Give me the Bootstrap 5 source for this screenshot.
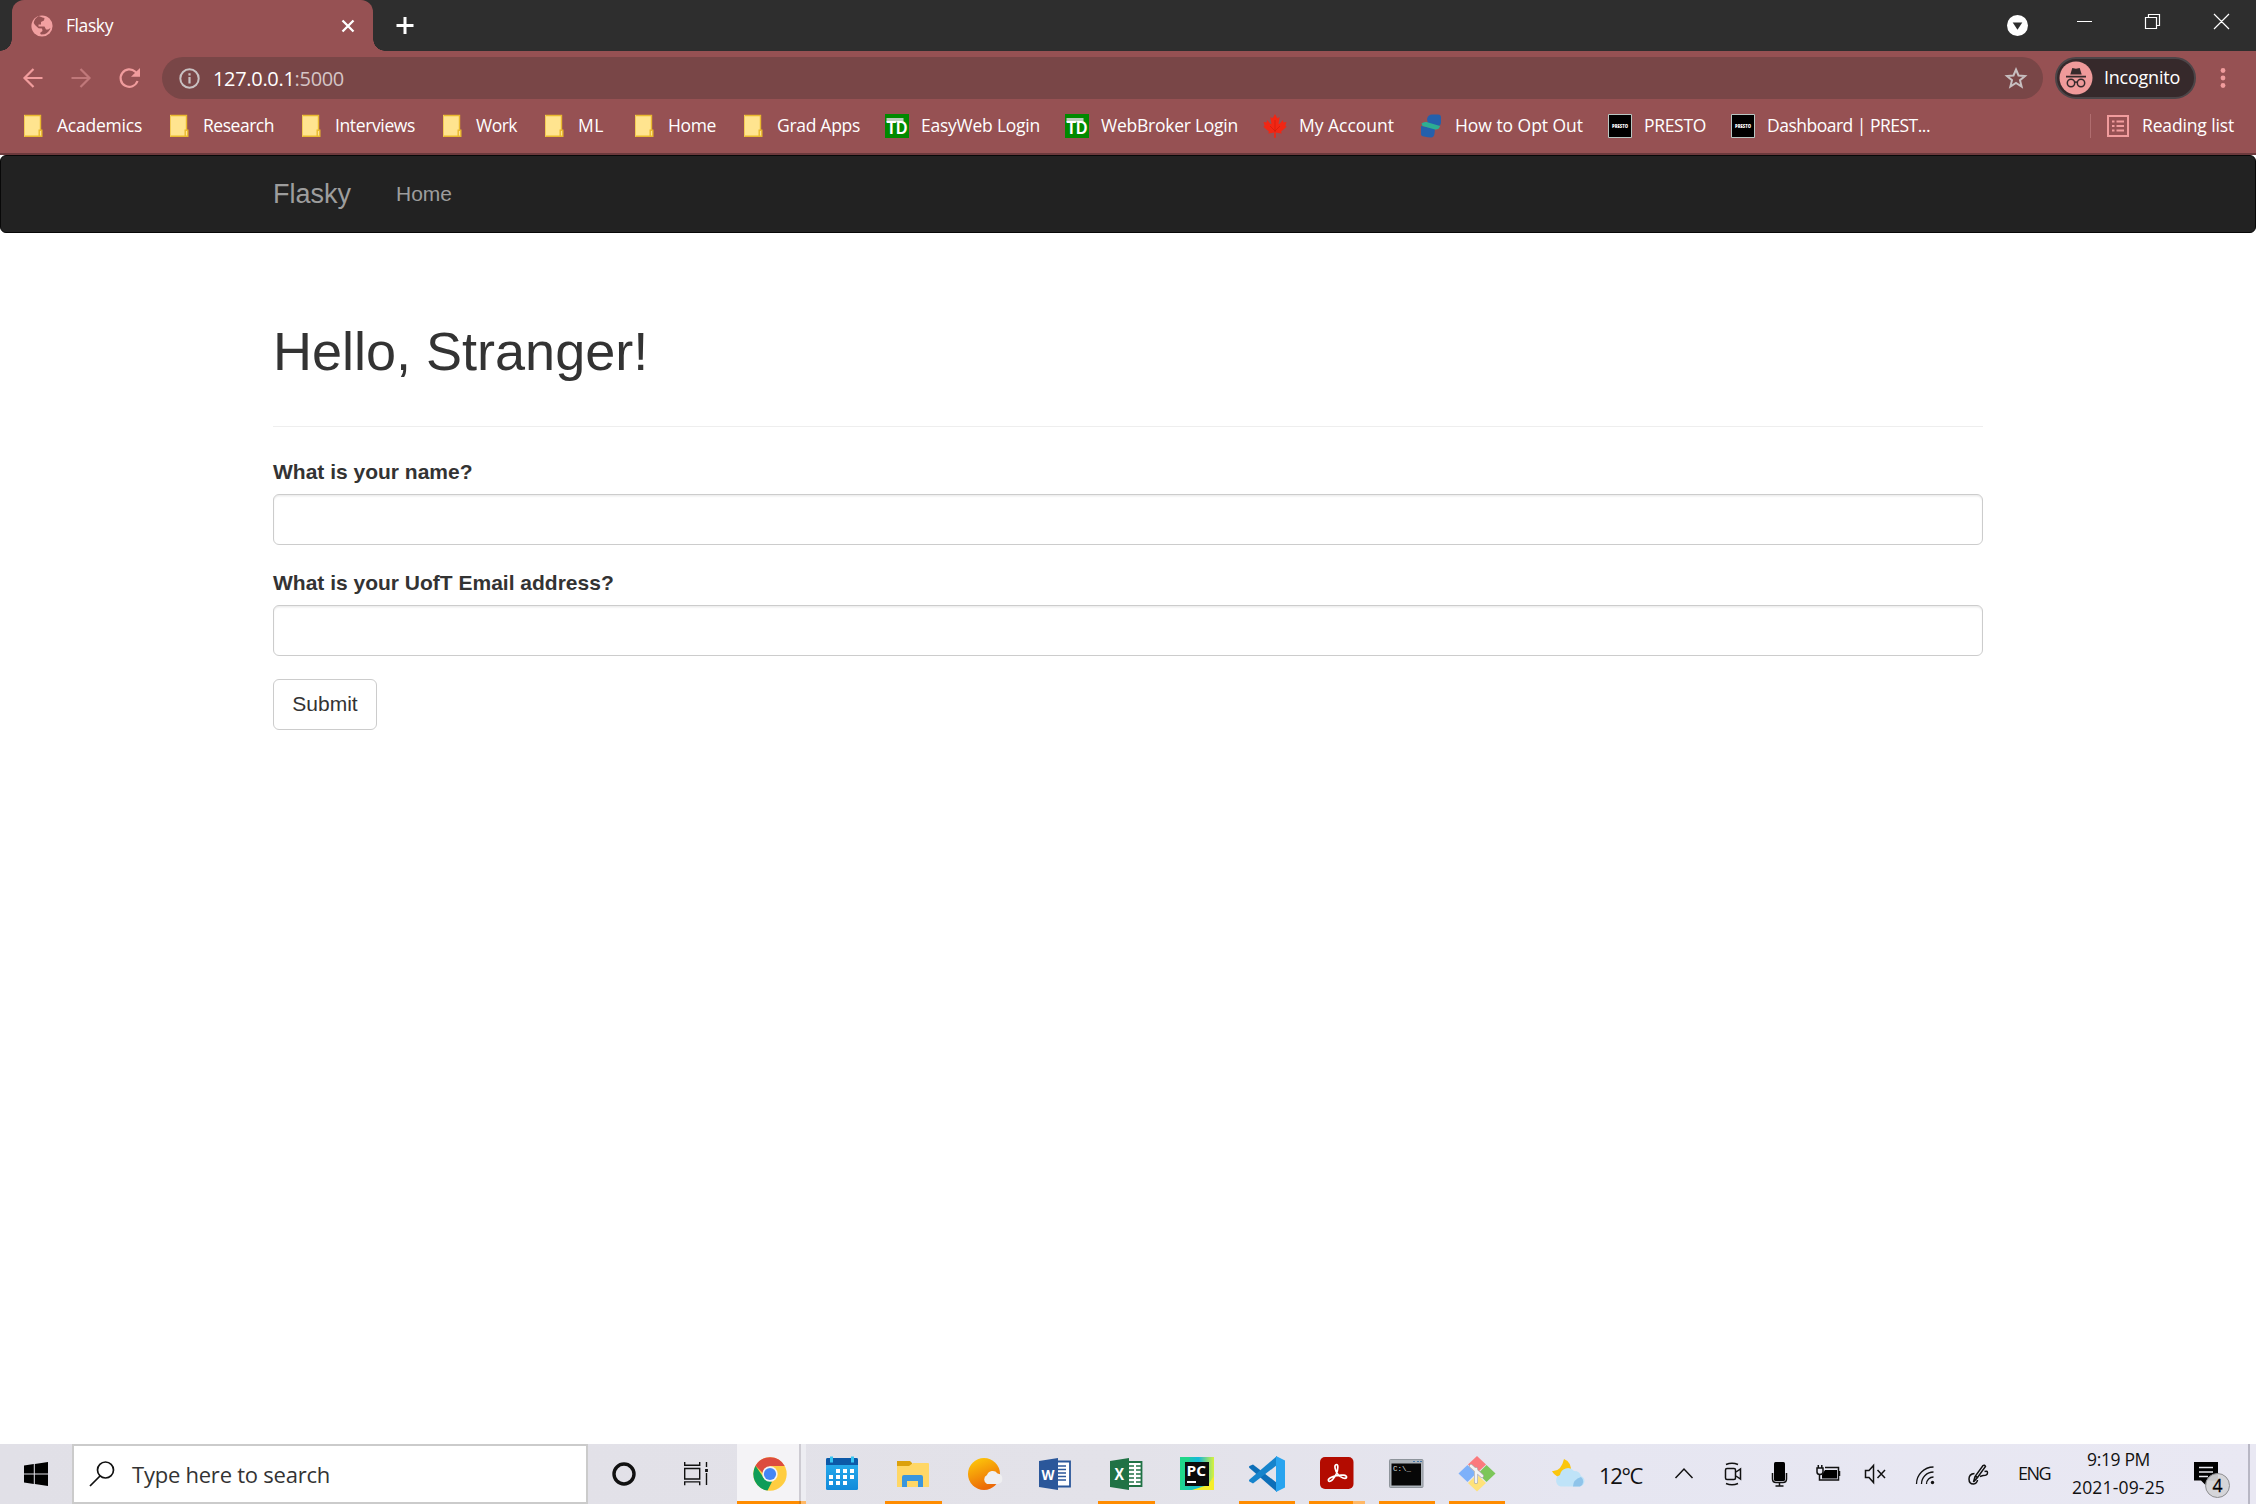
<!DOCTYPE html>
<html lang="en">
<head>
<meta charset="utf-8">
<title>Flasky</title>
<link href="https://cdn.jsdelivr.net/npm/bootstrap@5.3.0/dist/css/bootstrap.min.css" rel="stylesheet">
<style>
html,body{height:100%}
body{margin:0;background:#fff;overflow:hidden;font-family:"Liberation Sans",Arial,sans-serif;font-size:21px;line-height:30px;color:#333}
svg{display:block;flex:none}
.ui{font-family:"Open Sans","Noto Sans",sans-serif;white-space:nowrap}
[data-w]{display:inline-block;flex:none;white-space:nowrap}
/* browser frame */
.strip{height:51px;background:#2e2e2e}
.tabbox{position:relative;width:361px;margin-left:12px;background:#965153;border-radius:12px 12px 0 0;color:#fff;font-size:17.5px;line-height:51px}
.tabbox::before,.tabbox::after{content:"";position:absolute;bottom:0;width:12px;height:12px}
.tabbox::before{left:-12px;background:radial-gradient(circle at 0 0,transparent 11.5px,#965153 12px)}
.tabbox::after{right:-12px;background:radial-gradient(circle at 100% 0,transparent 11.5px,#965153 12px)}
.tabbox .ui{margin-left:19px}
.bar{height:54px;padding-top:6px;background:#965153}
.omni{width:1881px;height:42px;border-radius:21px;background:#794647;margin-left:7px}
.addr{font-size:20px;line-height:43px;color:#fff;margin-left:8px}
.addr span{color:#d5c5c6}
.incog{width:141px;height:42px;margin-left:12px;border:2px solid #4c4548;border-radius:21px;background:#36292b;color:#fff;font-size:18px;line-height:37px}
.marks{height:50px;background:#965153;border-bottom:2px solid #6b393c;padding-left:21px;color:#fff;font-size:17.5px;line-height:22px}
.marks .items{gap:24px;padding-bottom:6px}
.marks .items>div{gap:12px}
.marks .side{padding-bottom:6px;margin-right:21px}
.marks .side span{padding-bottom:2px}
/* page */
.navbar.top{height:78px;padding:0 0 1px;background:#222;border:1px solid #080808;border-radius:6px}
.wrap{width:1755px;max-width:none;padding:0 22.5px;margin:0 auto}
.navbar .wrap{display:flex;justify-content:flex-start}
.navbar .navbar-brand{font-size:27px;line-height:30px;padding:0;margin:0 45px 0 0;color:#9d9d9d}
.navbar .nav-link{font-size:21px;line-height:30px;padding:0;color:#9d9d9d}
main{flex:1 1 auto;min-height:0}
main.wrap{padding-top:89px}
h1.hello{font-size:54px;line-height:59.4px;font-weight:400;margin:0;padding-bottom:44.6px;border-bottom:1px solid #eee}
form{padding-top:29.5px}
.form-label{font-weight:700;margin:0 0 7.5px;display:block;line-height:30px}
.form-control{height:51px;border:1px solid #ccc;border-radius:6px;box-shadow:inset 0 1.5px 1.5px rgba(0,0,0,.075);margin-bottom:22.5px;padding:9px 18px;font-size:21px}
.btn.send{height:51px;width:104px;border:1px solid #ccc;border-radius:6px;padding:0 0 1px;font-size:21px;line-height:30px;color:#333;background:#fff}
/* taskbar */
.task{height:60px;background:linear-gradient(90deg,#e1e0e7,#e3e2e9 50%,#e6e6f1 70%,#e9e8f3);color:#111}
.find{flex:none;width:516px;height:60px;border:2px solid #cbcbcb;background:#fff;font-size:22px;line-height:57px;color:#333}
.temp{font-size:22px;line-height:62px;margin-left:13px}
.lang{font-size:18px;line-height:59px}
.clock{flex:none;font-size:17.5px;line-height:28px;width:94px;margin:1px 0 0 21px}
</style>
<script src="https://cdn.jsdelivr.net/npm/bootstrap@5.3.0/dist/js/bootstrap.bundle.min.js"></script>
</head>
<body class="d-flex flex-column">
<svg width="0" height="0" class="position-absolute">
<defs>
<symbol id="folder" viewBox="0 0 24 24"><path d="M3 1.5h16.5v15h1.5v6H3z" fill="#ffe48f"/><path d="M3 1.5h16.5v15M3 22.3h17.8v-6h-2.6v6" fill="none" stroke="#e9b92f" stroke-width="1.4"/><path d="M3.5 1v21.5" stroke="#f3cc55"/></symbol>
<symbol id="td" viewBox="0 0 24 24"><path d="M0 0h24v24H0z" fill="#008a00"/><path d="M1.500 4h17v4h-17z" fill="#b9cdb9"/><text x="1.500" y="19.500" font-family="Liberation Sans" font-weight="700" font-size="19" textLength="21" lengthAdjust="spacingAndGlyphs" fill="#fff">TD</text></symbol>
<symbol id="presto" viewBox="0 0 24 24"><path d="M.5.5h23v23H.5z" fill="#000" stroke="#b9c6c2"/><text x="4" y="14" font-family="Open Sans" font-weight="800" font-size="5" textLength="16" lengthAdjust="spacingAndGlyphs" fill="#fff">PRESTO</text></symbol>
</defs></svg>

<header>
<div class="strip d-flex">
  <div class="tabbox d-flex">
    <svg width="35" height="51" viewBox="12 0 35 51" overflow="visible"><circle cx="42" cy="26" r="10.600" fill="#f2a0a1"/><path d="M42.500 17.500l2 .5-.5 2.500-3 1.500v2.500h-2.500v2h6l1.500 3h2.200l2.300-1.500q-1.500 4.500-6 6.200l-3.500.3-1-1.500 2.500-2-.5-2.500-3.500-.3-3.500-3.200-1.300-2q.5-4.500 5-7z" fill="#965153"/><path d="M43.500 23.500l3.500-1 1.500 2.500-2 1.500-3-1z" fill="#f2a0a1"/></svg>
    <span class="ui" data-w="48">Flasky</span>
    <svg class="ms-auto me-2" width="28" height="51" viewBox="337 0 28 51"><path d="M342.500 20.500l11 11m0-11l-11 11" stroke="#fff" stroke-width="2.300"/></svg>
  </div>
  <svg width="64" height="51" viewBox="373 0 64 51"><path d="M405 17v17m-8.500-8.500h17" stroke="#fff" stroke-width="3" stroke-linecap="butt"/></svg>
  <svg class="ms-auto" width="256" height="51" viewBox="2000 0 256 51"><circle cx="2017.500" cy="25.500" r="10.500" fill="#fff"/><path d="M2012.700 22.500h9.600l-4.800 7.200z" fill="#2e2e2e"/><path d="M2077 21.500h15M2145.500 17.500h11v11h-11zM2148.500 17.500v-3h11v11h-3M2214 14l15 15M2229 14l-15 15" fill="none" stroke="#fff" stroke-width="1.200"/></svg>
</div>
<div class="bar d-flex">
  <svg width="155" height="42" viewBox="0 57 155 42" fill="none" stroke="#f19c9d" stroke-width="2.200"><path d="M42.500 78H25m8.500-9L24.500 78l9 9"/><path d="M71.500 78H89m-8.500-9l9 9-9 9" stroke="#c0787a"/><path d="M137.500 81a8.700 8.700 0 1 1-2.200-9.200l2.200 2.200"/><path d="M140 68v8.800h-9z" fill="#f19c9d" stroke="none"/></svg>
  <div class="omni d-flex">
    <svg width="43" height="42" viewBox="162 57 43 42"><circle cx="189.500" cy="78.500" r="9.200" fill="none" stroke="#c9c1c2" stroke-width="2"/><path d="M189.500 77v6.500m0-10.300v2.300" stroke="#c9c1c2" stroke-width="2.200"/></svg>
    <div class="ui addr" data-w="132">127.0.0.1<span>:5000</span></div>
    <svg class="ms-auto" width="43" height="42" viewBox="2000 57 43 42"><path d="M2016 69.500l2.500 6 6.500.5-5 4.200 1.600 6.300-5.600-3.500-5.600 3.500 1.600-6.300-5-4.200 6.500-.5z" fill="none" stroke="#c7bfc0" stroke-width="2"/></svg>
  </div>
  <div class="incog d-flex">
    <svg width="47" height="38" viewBox="2057 59 47 38"><circle cx="2076" cy="78" r="16.500" fill="#ef9a9a"/><path d="M2070.300 74.500l2-6.500 3.700.8 3.700-.8 2 6.500zM2066 75.800h20v1.700h-20z" fill="#36292b"/><g fill="none" stroke="#36292b" stroke-width="1.500"><circle cx="2071" cy="83" r="3.700"/><circle cx="2081" cy="83" r="3.700"/><path d="M2074.500 82.500q1.500-1 3 0"/></g></svg>
    <span class="ui" data-w="77">Incognito</span>
  </div>
  <svg width="60" height="42" viewBox="2196 57 60 42" fill="#f19c9d"><circle cx="2223" cy="70.500" r="2.400"/><circle cx="2223" cy="78" r="2.400"/><circle cx="2223" cy="85.500" r="2.400"/></svg>
</div>
<div class="marks d-flex justify-content-between">
  <div class="items ui d-flex align-items-center">
    <div class="d-flex"><svg width="24" height="24"><use href="#folder"/></svg><span data-w="86">Academics</span></div>
    <div class="d-flex"><svg width="24" height="24"><use href="#folder"/></svg><span data-w="72">Research</span></div>
    <div class="d-flex"><svg width="24" height="24"><use href="#folder"/></svg><span data-w="81">Interviews</span></div>
    <div class="d-flex"><svg width="24" height="24"><use href="#folder"/></svg><span data-w="42">Work</span></div>
    <div class="d-flex"><svg width="24" height="24"><use href="#folder"/></svg><span data-w="30" data-fit="26">ML</span></div>
    <div class="d-flex"><svg width="24" height="24"><use href="#folder"/></svg><span data-w="49">Home</span></div>
    <div class="d-flex"><svg width="24" height="24"><use href="#folder"/></svg><span data-w="84">Grad Apps</span></div>
    <div class="d-flex"><svg width="24" height="24"><use href="#td"/></svg><span data-w="120">EasyWeb Login</span></div>
    <div class="d-flex"><svg width="24" height="24"><use href="#td"/></svg><span data-w="138">WebBroker Login</span></div>
    <div class="d-flex"><svg width="24" height="24" viewBox="0 0 24 24"><path d="M12 0l2.300 4.200 2.400-1.200-1.200 6.800 1 .3 3.300-4 .7 2.400 3-.5-1.200 3.800 1.400 1-5.600 4.700.6 2-6-.9.300 5.200h-2l.3-5.200-6 .9.600-2L.3 12.800l1.400-1L.5 8l3 .5.700-2.400 3.300 4 1-.3L7.300 3l2.400 1.200z" fill="#f22613"/><path d="M12 6v12M12 17l-5-5M12 17l5-5" stroke="#cf1c0c" stroke-width=".7" fill="none"/></svg><span data-w="96">My Account</span></div>
    <div class="d-flex"><svg width="24" height="24" viewBox="0 0 24 24"><path d="M8 5q1-4.500 5-4.500h6q3 0 3 3v5q0 3-3 3.500L9 10z" fill="#2460ac"/><path d="M2 12v8q0 2 3 2.500 4 1 7 1 3 0 3.500-4l.5-5z" fill="#2460ac"/><path d="M2.500 9.500q2-2 5-1.500L21 12q-1 4-5 3.500L3.500 12z" fill="#2dae92"/></svg><span data-w="129">How to Opt Out</span></div>
    <div class="d-flex"><svg width="24" height="24"><use href="#presto"/></svg><span data-w="63">PRESTO</span></div>
    <div class="d-flex"><svg width="24" height="24"><use href="#presto"/></svg><span data-w="164">Dashboard | PREST...</span></div>
  </div>
  <div class="side ui d-flex align-items-center">
    <svg width="52" height="26" viewBox="2090 113 52 26"><path d="M2090.500 114v24" stroke="#b06d6f"/><g fill="none" stroke="#f19c9d" stroke-width="2"><path d="M2108 116h20v20h-20z"/><path d="M2112 121.500h2.500m2 0h7.500m-12 4.500h2.500m2 0h7.500m-12 4.500h2.500m2 0h7.500"/></g></svg>
    <span data-w="93">Reading list</span>
  </div>
</div>
</header>

<nav class="navbar top"><div class="wrap"><a class="navbar-brand" href="#">Flasky</a><a class="nav-link" href="#">Home</a></div></nav>
<main class="wrap">
  <h1 class="hello">Hello, Stranger!</h1>
  <form>
    <label class="form-label" for="n">What is your name?</label><input class="form-control" id="n">
    <label class="form-label" for="e">What is your UofT Email address?</label><input class="form-control" id="e">
    <button class="btn send" type="button">Submit</button>
  </form>
</main>

<footer class="task d-flex">
  <svg width="72" height="60" viewBox="0 1444 72 60"><path d="M24 1465.400l9.800-1.400v9.500H24zm10.800-1.500l13.200-1.900v11.500h-13.200zM24 1474.500h9.800v9.500l-9.800-1.400zm10.800 0H48v11.500l-13.200-1.900z" fill="#000"/></svg>
  <div class="find d-flex"><svg width="58" height="56" viewBox="74 1446 58 56" fill="none" stroke="#111" stroke-width="1.700"><circle cx="105.500" cy="1470" r="8"/><path d="M100 1476l-10 10"/></svg><span class="ui" data-w="199">Type here to search</span></div>
  <svg width="149" height="60" viewBox="588 1444 149 60" fill="none" stroke="#111"><circle cx="624" cy="1474" r="10" stroke-width="3.400"/><g stroke-width="1.400"><path d="M684.700 1462v3.300h15v-3.300m-15 6.500h15v10.500h-15zm0 16.700v-3.300h15v3.300M706.500 1462v5m0 6v12"/><path d="M706.500 1469v3" stroke-width="2.800"/></g></svg>
  <svg width="774" height="60" viewBox="737 1444 774 60">
    <defs><linearGradient id="sun" x2=".4" y2="1"><stop stop-color="#ffcf0a"/><stop offset="1" stop-color="#ec6a08"/></linearGradient><linearGradient id="cal" x2="0" y2="1"><stop stop-color="#2bb1ef"/><stop offset="1" stop-color="#128ada"/></linearGradient><linearGradient id="pc"><stop stop-color="#21d789"/><stop offset=".55" stop-color="#16b9d8"/><stop offset="1" stop-color="#d8f23c"/></linearGradient></defs>
    <path d="M737 1444h62v60h-62z" fill="#f4f3f6"/><path d="M799 1444h2v60h-2z" fill="#cdcbd2"/><path d="M801 1444h5v60h-5z" fill="#ededf2"/>
    <path d="M737 1501h62v3h-62zM885 1501h57v3h-57zM1098 1501h57v3h-57zM1239 1501h56v3h-56zM1309 1501h44v3h-44zM1379 1501h56v3h-56zM1449 1501h56v3h-56z" fill="#ff8c00"/><path d="M799 1501h2v3h-2z" fill="#d77d10"/><path d="M801 1501h5v3h-5zM1353 1501h12v3h-12z" fill="#ffb866"/>
    <!-- Chrome -->
    <circle cx="770" cy="1474" r="16.700" fill="#ffcd40"/><path d="M755.500 1465.700l8.500 12.500 8 3.500-4.500 8.800a16.700 16.700 0 0 1-12-24.800z" fill="#0f9d58"/><path d="M755.500 1465.700a16.700 16.700 0 0 1 29.200.3H770l-7.200 7z" fill="#dd4b3e"/><circle cx="770" cy="1474" r="7.700" fill="#f3f3f3"/><circle cx="770" cy="1474" r="6.100" fill="#4486f4"/>
    <!-- Calendar -->
    <rect x="826" y="1458" width="32" height="32" rx="1.500" fill="url(#cal)"/><path d="M826 1465v-5.500q0-1.500 1.500-1.500h29q1.500 0 1.500 1.500v5.500z" fill="#0c59a8"/><path d="M830 1456.500h3v6h-3zm21 0h3v6h-3z" fill="#35c5f3"/><path d="M836 1469h4v4h-4zm7 0h4v4h-4zm7 0h4v4h-4zM829 1475h4v4h-4zm7 0h4v4h-4zm7 0h4v4h-4zm7 0h4v4h-4zM829 1481h4v4h-4zm7 0h4v4h-4zm7 0h4v4h-4z" fill="#fff"/>
    <!-- Explorer -->
    <path d="M897 1461h13l2 2v4h-15z" fill="#dca10c"/><path d="M897 1466h12l4-3h15q1 0 1 1v23h-32z" fill="#ffd766"/><path d="M902 1487v-10q0-2 2-2h17q2 0 2 2v10h-5v-6h-11v6z" fill="#3a96dd"/>
    <!-- Weather -->
    <circle cx="984" cy="1474" r="16" fill="url(#sun)"/><path d="M987 1484a5 5 0 0 1 0-9 6 6 0 0 1 10.500-1.500 5.300 5.300 0 0 1 .5 10.500z" fill="#efeff1"/>
    <!-- Word, Excel -->
    <path d="M1055 1461.500h15v25h-15z" fill="#fff" stroke="#2b579a" stroke-width="1.800"/><path d="M1058 1466h8m-8 3.500h8m-8 3.500h8m-8 3.500h8m-8 3.500h8" stroke="#2b579a" stroke-width="1.400"/><path d="M1039 1461l19-3v32l-19-3z" fill="#2b579a"/><text x="1041.500" y="1480" font-family="Open Sans" font-weight="700" font-size="15" textLength="13" lengthAdjust="spacingAndGlyphs" fill="#fff">W</text>
    <path d="M1127 1462h14.500v24H1127z" fill="#fff" stroke="#207245" stroke-width="1.800"/><path d="M1129 1466h5m2 0h5m-12 4h5m2 0h5m-12 4h5m2 0h5m-12 4h5m2 0h5m-12 4h5m2 0h5" stroke="#207245" stroke-width="1.500"/><path d="M1110 1461l19-3v32l-19-3z" fill="#207245"/><text x="1114.500" y="1480" font-family="Open Sans" font-weight="700" font-size="16" textLength="9.500" lengthAdjust="spacingAndGlyphs" fill="#fff">X</text>
    <!-- PyCharm -->
    <path d="M1180 1457h34v33h-34z" fill="url(#pc)"/><path d="M1214 1476v14h-22l16-5z" fill="#f6ee2a"/><path d="M1180 1457h10l-3 18-7 8z" fill="#20d68a"/><path d="M1185 1462h24v24h-24z" fill="#0b0b0b"/><text x="1186.500" y="1476" font-family="Open Sans" font-weight="700" font-size="15" textLength="19.500" lengthAdjust="spacingAndGlyphs" fill="#fff">PC</text><path d="M1187 1481h9v2h-9z" fill="#fff"/>
    <!-- VS Code -->
    <path d="M1253 1464.500l24 18.500v9l-27.500-24q-1-1 0-2z" fill="#0d6fb8"/><path d="M1253 1483.500l24-18.500v-9l-27.500 23.500q-1 1 0 2z" fill="#1684cc"/><path d="M1276 1456l9 4.500v27l-9 4.500z" fill="#29a4ef"/>
    <!-- Acrobat -->
    <rect x="1320" y="1457" width="33.500" height="32" rx="5" fill="#b30b00"/><path d="M1336.500 1464.500c-2.800 0-1.500 6.500 1.500 10 3 3.500 7.500 5 8.500 3 1-2.500-5.500-3-10-1.800-4.500 1-9 3-8 5 1.500 2.500 6-2.500 8-7.200 1.500-4 2-9 0-9z" fill="none" stroke="#fff" stroke-width="1.700"/>
    <!-- Command prompt -->
    <rect x="1389.500" y="1459.500" width="33.500" height="28" rx="1" fill="#aeb4bb" stroke="#8e949b"/><path d="M1391.500 1463.500h29.500v22h-29.500z" fill="#070707"/><path d="M1413 1461.500h2m2 0h2m1 0h2" stroke="#4777a8"/><text x="1393" y="1470.500" font-family="Liberation Mono" font-size="7.500" textLength="18" lengthAdjust="spacingAndGlyphs" fill="#ddd">C:\_</text>
    <!-- Git -->
    <path d="M1477 1456l9 8.500-9 8.500-9-8.500z" fill="#fb7a7d"/><path d="M1486.500 1465l9 8.500-9 8.500-8.500-8.500z" fill="#7cc65a"/><path d="M1477 1474.500l9 8.500-9 8.500-9-8.500z" fill="#ffe27a"/><path d="M1467.500 1465l8.500 8.500-8.500 8.500-9-8.500z" fill="#7db1fa"/><g stroke="#aaa" stroke-width="4" stroke-linecap="round"><path d="M1471 1466l11 10m-6-7v13"/></g><g stroke="#f3f3f3" stroke-width="2.600" stroke-linecap="round"><path d="M1471 1466l11 10m-6-7v13"/></g>
  </svg>
  <svg width="75" height="60" viewBox="1511 1444 75 60"><path d="M1564 1459q8 3 7 14l-12 4q-5-2-7-6 9 1 12-12z" fill="#fbc60d"/><path d="M1561 1486.500a6 6 0 0 1-1-11.500 8 8 0 0 1 14-4 7 7 0 0 1 7 5 5.500 5.500 0 0 1-1 10.500z" fill="#bfe3f8"/><path d="M1573 1486.500q0-7 8-9.500a5.500 5.500 0 0 1-1 9.500z" fill="#8fc4ea"/></svg>
  <span class="ui temp" data-w="44">12°C</span>
  <svg width="375" height="60" viewBox="1643 1444 375 60" fill="none" stroke="#111" stroke-width="1.500">
    <path d="M1675.500 1478l8.500-9 8.500 9"/>
    <rect x="1725.500" y="1468.500" width="10" height="11" rx="1.500"/><path d="M1736 1472l4.500-3v10l-4.500-3m-10-11.500q6-2.500 12 0m-12 19q6 2.500 12 0"/>
    <rect x="1774" y="1462" width="11" height="19" rx="1.500" fill="#000" stroke="none"/><path d="M1772.500 1473v6q0 3.500 3.500 3.500h7q3.500 0 3.500-3.500v-6m-7 9.500v3.500m-4 0h8"/>
    <path d="M1825 1467.500h13.500v12.500H1819.500v-6m20-3v5"/><path d="M1825 1470h12v8.500h-15v-4z" fill="#000" stroke="none"/><path d="M1817 1468h6v4q0 2.500-3 2.500t-3-2.500zm1.300 0v-3m3.500 3v-3"/>
    <path d="M1865.500 1470.500h3.500l4.500-5v17l-4.500-5h-3.500zM1877.500 1470l7.500 8m0-8l-7.500 8"/>
    <g stroke-width="1.300"><path d="M1916.500 1484a17 17 0 0 1 17-17m-12 17a12 12 0 0 1 12-12m-7 12a7 7 0 0 1 7-7"/></g><circle cx="1932.500" cy="1482.500" r="1.700" fill="#111" stroke="none"/>
    <path d="M1973.500 1482l1.500-5.500 8-11q1.500-1 2.500 1l-8 11zM1975 1476l2.500 1.500M1974.500 1473.500q-5.500.5-5.500 5.500 0 5 4.500 5 3.500-.5 4-4M1984.500 1471.500q3-1 3 1.200 0 3-4.500 2.800l-3 1"/>
  </svg>
  <span class="ui lang" data-w="33">ENG</span>
  <div class="clock ui d-flex flex-column align-items-center"><span data-w="64">9:19 PM</span><span data-w="94">2021-09-25</span></div>
  <svg width="90" height="60" viewBox="2166 1444 90 60"><path d="M2194 1462h24v18.500h-11v6l-6-6h-7z" fill="#000"/><path d="M2199 1467.500h14m-14 4.500h14m-14 4.500h9" stroke="#e8e8ee" stroke-width="1.300"/><circle cx="2217.500" cy="1485.500" r="12" fill="#d3d3d6" fill-opacity=".93" stroke="#8d8d90"/><text x="2217.500" y="1492" text-anchor="middle" font-family="Open Sans" font-size="17.500" fill="#000" stroke="#000" stroke-width=".3">4</text><path d="M2249 1444v60" stroke="#b8b7c4" stroke-width="2"/></svg>
</footer>
<script>
/* Track each label so its text fills the width given in data-w. */
document.querySelectorAll('[data-w]').forEach(function(el){
  var w=+el.dataset.w, target=+(el.dataset.fit||w-1), n=el.textContent.length;
  el.style.width='auto';
  el.style.letterSpacing=((target-el.getBoundingClientRect().width)/n).toFixed(3)+'px';
  el.style.width=w+'px';
});
</script>
</body>
</html>
